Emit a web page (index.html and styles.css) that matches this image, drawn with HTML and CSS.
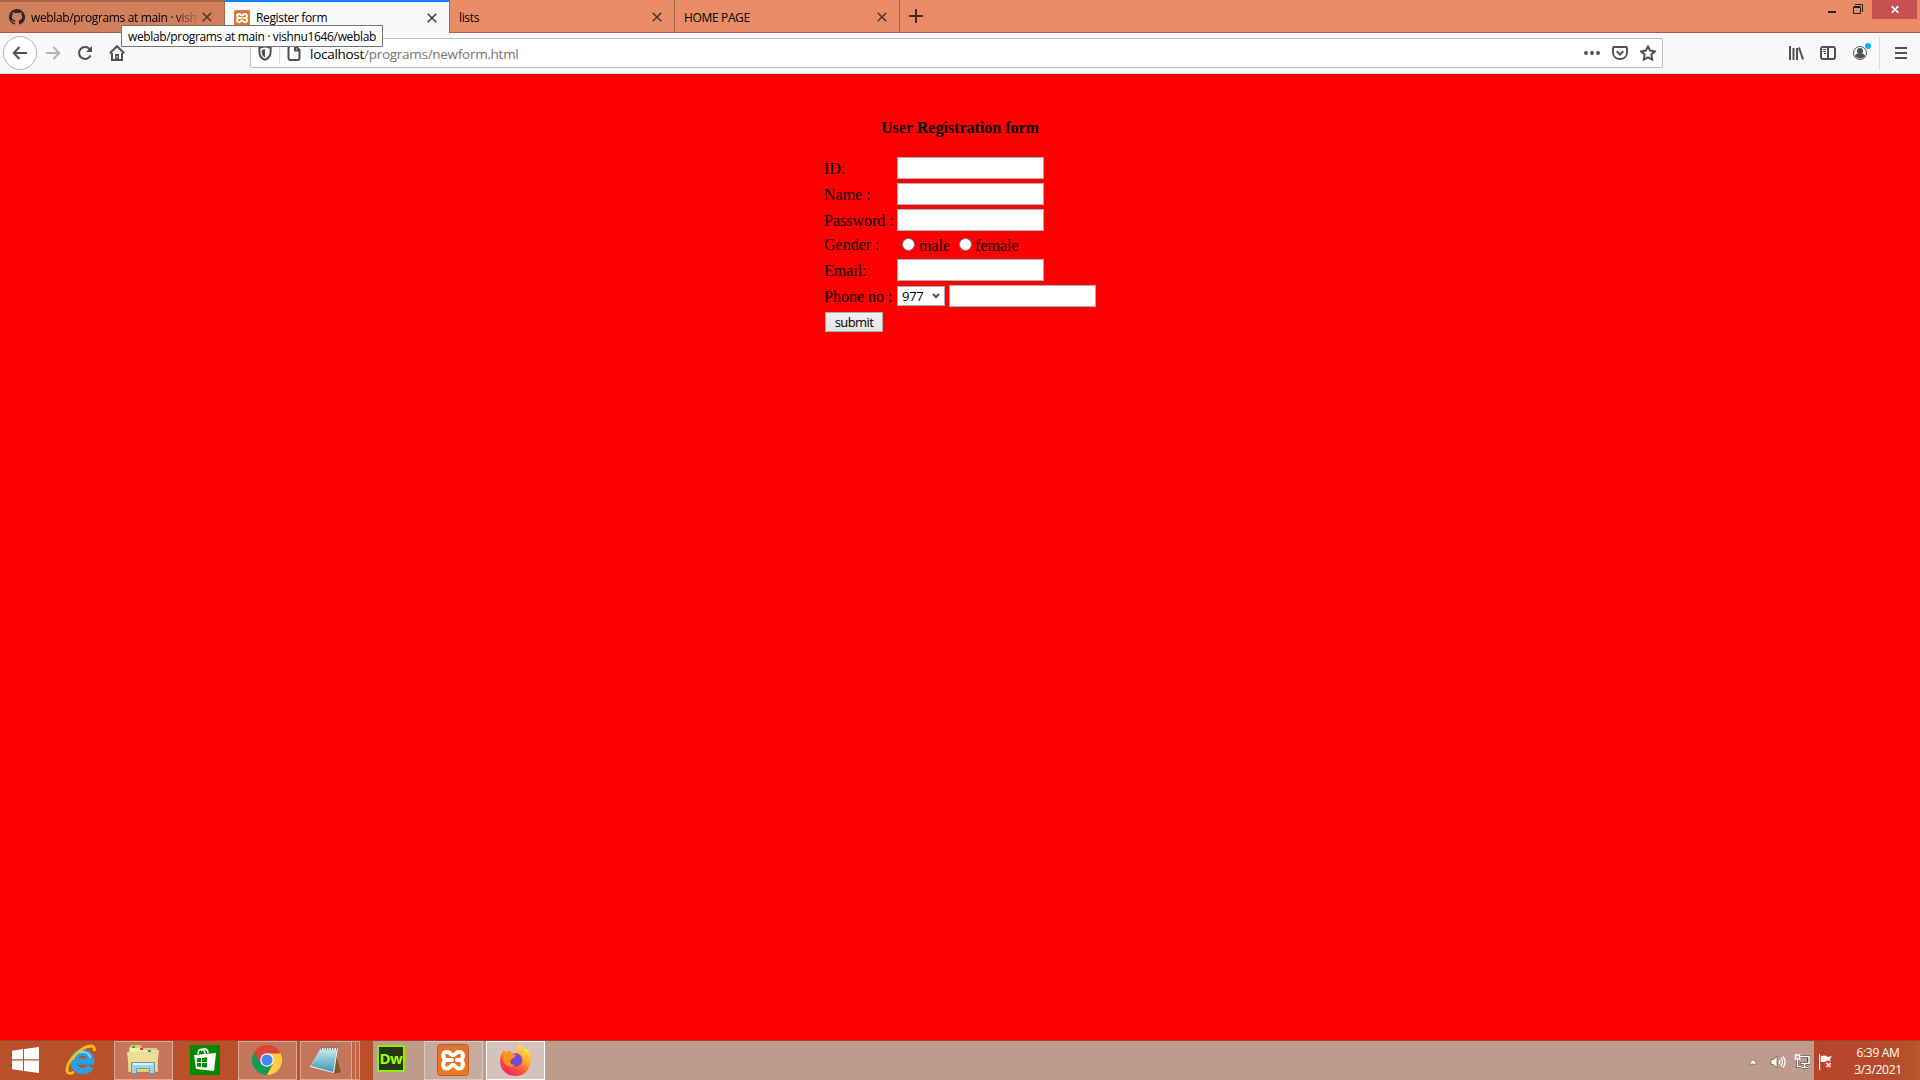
FILE: index.html
```html
<!DOCTYPE html>
<html lang="en">
<head>
<meta charset="utf-8">
<title>Register form</title>
<link rel="stylesheet" href="styles.css">
</head>
<body>
<header class="tabs">
  <div class="tab hovered">
    <svg class="favicon" viewBox="0 0 16 16"><path fill="#24292e" d="M8 0C3.58 0 0 3.58 0 8c0 3.54 2.29 6.53 5.47 7.59.4.07.55-.17.55-.38v-1.49c-2.01.37-2.53-.49-2.69-.94-.09-.23-.48-.94-.82-1.13-.28-.15-.68-.52-.01-.53.63-.01 1.08.58 1.23.82.72 1.21 1.87.87 2.33.66.07-.52.28-.87.51-1.07-1.78-.2-3.64-.89-3.64-3.95 0-.87.31-1.59.82-2.15-.08-.2-.36-1.02.08-2.12 0 0 .67-.21 2.2.82a7.6 7.6 0 0 1 4 0c1.53-1.04 2.2-.82 2.2-.82.44 1.1.16 1.92.08 2.12.51.56.82 1.27.82 2.15 0 3.07-1.87 3.75-3.65 3.95.29.25.54.73.54 1.48v2.2c0 .21.15.46.55.38A8 8 0 0 0 8 0Z"/></svg>
    <span class="tab-title faded">weblab/programs at main · vishnu1646/weblab</span>
    <svg class="close" viewBox="0 0 10 10"><path d="M.7.7l8.6 8.6M9.3.7L.7 9.3"/></svg>
  </div>
  <div class="tab active">
    <svg class="favicon" viewBox="0 0 32 32"><use href="#xampp"/></svg>
    <span class="tab-title">Register form</span>
    <svg class="close" viewBox="0 0 10 10"><path d="M.7.7l8.6 8.6M9.3.7L.7 9.3"/></svg>
  </div>
  <div class="tab">
    <span class="tab-title">lists</span>
    <svg class="close" viewBox="0 0 10 10"><path d="M.7.7l8.6 8.6M9.3.7L.7 9.3"/></svg>
  </div>
  <div class="tab">
    <span class="tab-title">HOME PAGE</span>
    <svg class="close" viewBox="0 0 10 10"><path d="M.7.7l8.6 8.6M9.3.7L.7 9.3"/></svg>
  </div>
  <svg class="new-tab" viewBox="0 0 14 14"><path d="M7 0v14M0 7h14"/></svg>
  <div class="window-buttons">
    <svg class="win-min" viewBox="0 0 8 2"><path fill="#222" d="M0 0h8v2H0z"/></svg>
    <svg class="win-max" viewBox="0 0 10 10"><path fill="none" stroke="#222" d="M2 .5h7.5V8M.5 3.5h7v6h-7zM.5 2.5h7"/></svg>
    <span class="win-close"><svg viewBox="0 0 8 7"><path d="M.7.2l6.6 6.6M7.3.2L.7 6.8"/></svg></span>
  </div>
</header>
<div class="tooltip">weblab/programs at main · vishnu1646/weblab</div>

<nav class="toolbar">
  <span class="back"><svg viewBox="0 0 16 16"><path d="M15 8H2M7.500 2L1.700 8l5.800 6"/></svg></span>
  <svg class="icon forward" viewBox="0 0 16 16"><path d="M1 8h13M8.500 2l5.800 6-5.800 6"/></svg>
  <svg class="icon reload" viewBox="0 0 16 16"><path d="M13.500 10.500A6 6 0 1 1 12.600 4"/><path class="solid" d="M15 1v6H9z"/></svg>
  <svg class="icon home" viewBox="0 0 16 16"><path d="M.8 8.300L8 1.200l7.200 7.100M3 8v7h10V8"/><path class="solid" d="M6 9h4v6H6z"/><path class="knob" d="M7.500 11h1v2h-1z"/></svg>
  <div class="urlbar">
    <svg class="icon shield" viewBox="0 0 16 16"><path d="M8 1.200l5.600 1.600v4c0 4-2.400 7-5.600 8-3.200-1-5.600-4-5.600-8v-4z"/><path class="solid" d="M8 4l-3.200.9v2.300C4.800 9.700 6 11.500 8 12.400z"/></svg>
    <i class="url-divider"></i>
    <svg class="icon document" viewBox="0 0 16 16"><path d="M4.500 1h5l4 4v8c0 1.200-.8 2-2 2h-7c-1.200 0-2-.8-2-2V3c0-1.200.8-2 2-2zM9 1v4.500h4.500"/></svg>
    <span class="url">localhost<em>/programs/newform.html</em></span>
    <svg class="icon dots" viewBox="0 0 16 16"><circle class="solid" cx="2" cy="8" r="2"/><circle class="solid" cx="8" cy="8" r="2"/><circle class="solid" cx="14" cy="8" r="2"/></svg>
    <svg class="icon pocket" viewBox="0 0 16 16"><path d="M2.200 2h11.600c.8 0 1.200.5 1.200 1.200V7c0 4.200-3 7-7 7s-7-2.800-7-7V3.200C1 2.500 1.400 2 2.200 2zM4.700 6.300L8 9.500l3.300-3.200"/></svg>
    <svg class="icon star" viewBox="0 0 16 16"><path d="M8 1.400l2 4.200 4.900.7-3.500 3.300.8 5L8 12.300l-4.200 2.300.8-5L1.100 6.300 6 5.600z"/></svg>
  </div>
  <svg class="icon library" viewBox="0 0 16 16"><path d="M2 1v14M5.500 3v12M9 3v12M11 2.500l4 12"/></svg>
  <svg class="icon sidebar" viewBox="0 0 16 16"><path d="M3 2h10c1.300 0 2 .7 2 2v8c0 1.300-.7 2-2 2H3c-1.300 0-2-.7-2-2V4c0-1.300.7-2 2-2zM8 2v12"/><path class="thin" d="M3 4.500h3M3 6.500h3M4 8.500h2"/></svg>
  <svg class="icon account" viewBox="0 0 20 20"><circle class="thin" cx="9" cy="11" r="6.500"/><circle class="solid" cx="9" cy="9" r="3"/><path class="solid" d="M4 14c.6-2 2-2.500 3-2.500h4c1.500 0 2.500 1 3 2.500-1.300 1.800-3 2.500-5 2.500s-3.800-.9-5-2.500z"/><circle cx="17" cy="4" r="3"/></svg>
  <i class="tool-divider"></i>
  <svg class="icon menu" viewBox="0 0 16 16"><path d="M2 3h12M2 8h12M2 13h12"/></svg>
</nav>

<main class="page">
  <form class="registration">
    <h4>User Registration form</h4>
    <label for="id">ID:</label><input id="id" class="field" type="text">
    <label for="name">Name :</label><input id="name" class="field" type="text">
    <label for="password">Password :</label><input id="password" class="field" type="password">
    <span>Gender :</span>
    <div class="gender"><input type="radio" name="gender" id="m"><label for="m">male</label><input type="radio" name="gender" id="f"><label for="f">female</label></div>
    <label for="email">Email:</label><input id="email" class="field" type="text">
    <label for="phone">Phone no :</label>
    <div class="phone"><div class="code">977<svg viewBox="0 0 8 6"><path d="M1 1l3 3 3-3"/></svg></div><input id="phone" class="field" type="text"></div>
    <button type="button">submit</button>
  </form>
</main>

<footer class="taskbar">
  <div class="task start"><svg width="27" height="26" viewBox="0 0 27 26"><path fill="#fff" d="M0 3.700l11-1.600v10.200H0zM12 1.900L27 0v12.300H12zM0 13.500h11v10.300L0 22.300zM12 13.500h15V26l-15-2z"/></svg></div>
  <div class="task ie"><svg width="32" height="32" viewBox="0 0 32 32"><path fill="none" stroke="#2c9fe0" stroke-width="6.500" d="M8 17.500h18c0-6-4-9-8.500-9s-9 3.500-9 9 4 9.500 9 9.500c3.500 0 6.500-1.500 8-4.500"/><path fill="none" stroke="#7fd4fa" stroke-width="2" d="M8 16c1-5 5-8 9.500-8s7 2.500 8 6"/><path fill="none" stroke="#f9bd16" stroke-width="2.800" d="M29 7c1-3 0-5-3-5C18 2 3 15 2 25c-.3 4 2 6 7 3"/></svg></div>
  <div class="task open explorer"><svg width="33" height="30" viewBox="0 0 33 30"><path fill="#e5ca72" d="M2 3l2-3h9l2 3h15l1 24H1z"/><path fill="#f9edb0" d="M3 3h11l2 2h13v4H3z"/><path fill="#f0dc92" d="M0 7h18l2-2h12l-2 20H2z"/><path fill="#3aaa35" d="M5 1h3v2H5z"/><path fill="#d64224" d="M13 3h3v2h-3z"/><path fill="#238ed8" d="M21 5h3v2h-3z"/><path fill="#9fd3ea" stroke="#5a9dc0" d="M4.500 17.500h23v11h-5v-5h-13v5h-5z"/><path fill="#d9f1fb" d="M6 18h20v2H6z"/></svg></div>
  <div class="task store"><svg width="30" height="30" viewBox="0 0 30 30"><path fill="#008a00" d="M0 0h30v30H0z"/><path fill="none" stroke="#fff" stroke-width="1.500" d="M8 9c0-6 7-7 7 0M11 6c3-4 7-2 7 2"/><path fill="#fff" d="M4 10l22-2-2 18-18-2z"/><path fill="#008a00" d="M7 13.500l4-.5v4H7zM12 12.900l5-.6v4.700h-5zM7 18h4v4l-4-.5zM12 18h5v4.700l-5-.6z"/></svg></div>
  <div class="task open chrome"><svg width="30" height="30" viewBox="0 0 30 30"><path fill="#109d58" d="M15 15L2 7.500A15 15 0 0 0 15 30l6-11z"/><path fill="#ffcd40" d="M15 15l6 4-6 11A15 15 0 0 0 28 7.500H15z"/><path fill="#db4437" d="M2 7.500l6 10L15 8.500h13.500A15 15 0 0 0 2 7.500z"/><circle cx="15" cy="15" r="6.800" fill="#f5f5f5"/><circle cx="15" cy="15" r="5.500" fill="#4285f4"/></svg></div>
  <div class="task open notepad"><svg width="31" height="30" viewBox="0 0 31 30"><path fill="#7a5a20" d="M26 11l5 16-7 2z"/><path fill="#e9f5f7" d="M11 3h17l-4 25L0 22z"/><path fill="url(#paper)" d="M10 5h17l-4 22L1 21z"/><path stroke="#777" stroke-dasharray="1 1.500" stroke-width="4" d="M11 3h17"/></svg></div>
  <i class="stack"></i><i class="stack"></i>
  <div class="task dreamweaver"><span>Dw</span></div>
  <div class="task open xampp"><svg width="32" height="32" viewBox="0 0 32 32"><use href="#xampp"/></svg></div>
  <div class="task open current firefox"><svg width="31" height="32" viewBox="0 0 31 32"><path fill="url(#flame)" d="M20 0c1 3 3 4 4 6 1-1 1-2 1-3 5 4 6 9 5.500 15C30 26 24 32 15.500 32S0 26 0 17c0-4 1.500-8 4-11l1 3c2-2 4-2 6-1.500 1 1.500 3 2 5 2C15 6 18 4 20 0z"/><circle cx="15.500" cy="16" r="6.800" fill="#7646d7"/><path fill="#ff9320" d="M4 6l1 3c2-2 4-2 6-1.500 0 2 1 3 5 3.500 0 3-4 3-5 5-2 2 0 5 4 5-4 4-12 1-12-6 0-3 .5-6 1-9z"/></svg></div>
  <div class="tray">
    <svg class="chevron" width="8" height="6" viewBox="0 0 8 6"><path fill="#fff" stroke="#786058" stroke-width=".6" d="M0 5l4-4.500L8 5z"/></svg>
    <svg class="volume" width="16" height="14" viewBox="0 0 16 14"><path fill="#fff" stroke="#675047" stroke-width=".7" d="M1 4.500h2.500L7 1v12L3.500 9.500H1z"/><path fill="none" stroke="#fff" stroke-width="1.300" d="M9 5q1.500 2 0 4M11 3q3 4 0 8M13 1.500q4 5.500 0 11"/></svg>
    <svg class="network" width="17" height="15" viewBox="0 0 17 15"><path fill="none" stroke="#5d4840" stroke-width="3" d="M5.500 2.500h9v7h-8M10.500 10v3M7 13.500h7M3.500 5v7.500H7"/><path fill="none" stroke="#fff" stroke-width="1.500" d="M6 2.500h9v7H7M10.500 10v3M7 13.500h7M3.500 5v7.500H7M1.500 1h4v4h-4z"/></svg>
    <svg class="flag" width="16" height="16" viewBox="0 0 16 16"><path fill="#fff" d="M1 0h1.200v16H1zM3 2l4-.5 3 1.500 4-1-2 3 1 3H3z"/><circle cx="10.500" cy="11" r="4.500" fill="#e13d35"/><path stroke="#fff" stroke-width="1.600" d="M8.500 9l4 4M12.500 9l-4 4"/></svg>
  </div>
  <div class="clock"><span>6:39 AM</span><span>3/3/2021</span></div>
</footer>

<svg class="defs" width="0" height="0">
  <defs>
    <linearGradient id="orange" x2="0" y2="1"><stop stop-color="#d9743a"/><stop offset=".3" stop-color="#e5712a"/><stop offset="1" stop-color="#ea7a22"/></linearGradient>
    <linearGradient id="paper" x2="0" y2="1"><stop stop-color="#c4e6ec"/><stop offset="1" stop-color="#3b98b0"/></linearGradient>
    <linearGradient id="flame" x1=".8" x2=".2" y2="1"><stop stop-color="#fff044"/><stop offset=".4" stop-color="#ffa52a"/><stop offset=".7" stop-color="#ff4b3c"/><stop offset="1" stop-color="#e81e70"/></linearGradient>
    <symbol id="xampp" viewBox="0 0 32 32"><rect x=".5" y=".5" width="31" height="31" rx="3" fill="url(#orange)" stroke="#c05a20"/><path fill="none" stroke="#fff" stroke-width="4" stroke-linejoin="round" stroke-linecap="round" d="M8.500 16C4.500 12 6 8 10 8s3 3 6 3 2-3 6-3 5.500 4 2 8c3.500 4 2 8.500-2 8.500s-3-3.500-6-3.500-2 3.500-6 3.500S4.500 20 8.500 16zM9 16h6M20 16h4"/></symbol>
  </defs>
</svg>
</body>
</html>
```
FILE: styles.css
```css
* { box-sizing: border-box; }
body {
  margin: 0;
  width: 1920px;
  height: 1080px;
  overflow: hidden;
  display: flex;
  flex-direction: column;
  font-family: "Open Sans", "Noto Sans", sans-serif;
  font-size: 12px;
  color: #000;
}
svg { flex: none; display: block; }
.defs { position: absolute; }

/* Tab strip */
.tabs {
  height: 33px;
  display: flex;
  align-items: flex-start;
  background: #ea8d66;
  border-bottom: 1px solid #9f6046;
}
.tab {
  width: 225px;
  height: 32px;
  padding: 2px 12px 0 9px;
  display: flex;
  align-items: center;
  border-right: 1px solid #a8664b;
}
.tab.hovered { background: #d27f5c; border-top: 2px solid #a96549; padding-top: 0; }
.tab.active { height: 33px; background: #f9f9fa; border-top: 2px solid #0a84ff; padding-top: 0; }
.favicon { width: 16px; height: 16px; margin-right: 6px; }
.tab-title {
  flex: 1;
  min-width: 0;
  overflow: hidden;
  white-space: nowrap;
  font-size: 12px;
  letter-spacing: -.35px;
}
.tab-title.faded { mask-image: linear-gradient(to right, #000 140px, transparent 170px); }
.close { width: 10px; height: 10px; margin-left: 6px; }
.close path { stroke: #4d3429; stroke-width: 1.5; fill: none; }
.new-tab { width: 14px; height: 14px; margin: 9px 0 0 9px; }
.new-tab path { stroke: #46291d; stroke-width: 2; }
.window-buttons { margin-left: auto; display: flex; align-items: flex-start; padding-right: 3px; }
.win-min { width: 8px; height: 2px; margin: 11px 17px 0 0; }
.win-max { width: 10px; height: 10px; margin: 4px 9px 0 0; }
.win-close { width: 45px; height: 19px; background: #c75050; display: grid; place-items: center; }
.win-close svg { width: 8px; height: 7px; }
.win-close path { stroke: #fff; stroke-width: 1.7; }
.tooltip {
  position: absolute;
  left: 121px;
  top: 25px;
  width: 262px;
  height: 22px;
  border: 1px solid #767676;
  background: #fff;
  padding-left: 6px;
  line-height: 22px;
  font-size: 12px;
  letter-spacing: -.35px;
  white-space: nowrap;
  z-index: 1;
}

/* Navigation toolbar */
.toolbar {
  height: 41px;
  display: flex;
  align-items: center;
  background: #f9f9fa;
  border-bottom: 1px solid #dcdcdc;
  padding: 0 11px 0 3px;
}
.back {
  width: 34px;
  height: 34px;
  border: 1px solid #b1b1b1;
  border-radius: 50%;
  background: #fff;
  display: grid;
  place-items: center;
}
.back svg, .icon { width: 16px; height: 16px; }
.back path, .icon path, .icon circle { fill: none; stroke: #505055; stroke-width: 2; }
.icon .solid { fill: #505055; stroke: none; }
.icon .knob { fill: #f9f9fa; stroke: none; }
.icon .thin { stroke-width: 1; }
.forward { margin-left: 8px; }
.icon.forward path { stroke: #b5b5b6; }
.reload { margin-left: 16px; }
.home { margin-left: 16px; }
.urlbar {
  flex: none;
  width: 1413px;
  height: 30px;
  margin-left: 125px;
  border: 1px solid #bcbcbc;
  border-radius: 2px;
  background: #fff;
  display: flex;
  align-items: center;
  padding: 0 6px;
}
.url-divider { width: 1px; height: 22px; background: #dedede; margin: 0 6px; }
.url { flex: 1; margin-left: 8px; padding-top: 1px; font-size: 13.5px; letter-spacing: -.28px; }
.url em { font-style: normal; color: #777; }
.pocket, .star { margin-left: 12px; }
.library { margin-left: 125px; }
.sidebar { margin-left: 16px; }
.icon.account { width: 20px; height: 20px; margin: -3px 0 0 15px; }
.icon.account circle:last-child { fill: #00b3f4; stroke: none; }
.tool-divider { width: 1px; height: 34px; background: #dcdcde; margin: 0 13px 0 8px; }

/* Registration page */
.page {
  height: 966px;
  background: #f00;
  font: 16px/20px "Liberation Serif", serif;
  display: flex;
  justify-content: center;
  align-items: flex-start;
  padding-top: 44px;
}
.registration {
  width: 272px;
  display: grid;
  grid-template-columns: 73px 199px;
  grid-template-rows: 39px 26px 26px 26px 24px 26px 26px 24px;
  white-space: nowrap;
}
.registration h4 { grid-column: 1 / 3; margin: 0; text-align: center; font-size: 16px; }
.registration > label { padding-top: 2px; }
.field {
  width: 147px;
  height: 22px;
  border: 1px solid #abadb3;
  background: #fff;
  padding: 1px;
  margin: 0;
}
.gender { display: flex; align-items: flex-start; }
.gender label { padding-top: 1px; }
.gender input {
  appearance: none;
  width: 13px;
  height: 13px;
  border: 1px solid #777;
  border-radius: 50%;
  background: #fff;
  margin: 3px 4px 0 5px;
}
.gender label + input { margin-left: 9px; margin-right: 3px; }
.phone { display: flex; gap: 4px; }
.code {
  width: 48px;
  height: 20px;
  margin-top: 1px;
  border: 1px solid #abadb3;
  background: #fff;
  display: flex;
  align-items: center;
  justify-content: space-between;
  padding: 0 4px;
  font: 13px/18px "Open Sans", sans-serif;
  letter-spacing: -.3px;
}
.code svg { width: 8px; height: 6px; }
.code path { fill: none; stroke: #505050; stroke-width: 2; }
button {
  width: 58px;
  height: 20px;
  margin: 1px;
  padding: 1px 0 0;
  border: 1px solid #acacac;
  background: linear-gradient(#f0f0f0, #e5e5e5);
  color: #000;
  font: 13px/17px "Open Sans", sans-serif;
  letter-spacing: -.6px;
}

/* Taskbar */
.taskbar {
  height: 40px;
  display: flex;
  background: linear-gradient(to right, #b95029 373px, #bf9b8c 373px 1814px, #b7442a 1814px, #b64d2b 1900px, #b9572e);
  border-top: 1px solid #9c4527;
}
.task { height: 39px; display: grid; place-items: center; padding-bottom: 2px; }
.open { width: 59px; border: 1px solid #e0a891; background: #c57559; padding-right: 1px; }
.start { width: 50px; }
.ie { width: 64px; padding-right: 2px; }
.store { width: 65px; padding-right: 2px; }
.chrome { margin-right: 3px; }
.notepad { width: 52px; }
.stack { width: 4px; height: 39px; border: 1px solid #d99b83; border-left: 0; background: #bd6546; }
.dreamweaver { width: 64px; padding: 0 0 5px 17px; justify-items: start; }
.dreamweaver span {
  width: 28px;
  height: 27px;
  border: 2px solid #8cf000;
  background: #263512;
  color: #9eff00;
  font: bold 15px/22px "Open Sans", sans-serif;
  text-align: center;
  letter-spacing: -.5px;
}
.xampp { margin-right: 3px; border-color: #dccac2; background: #c7aa9e; }
.current { border-color: #fff; background: #d5c2ba; }
.tray { margin-left: auto; display: flex; align-items: center; padding-top: 2px; }
.volume { margin-left: 13px; }
.network { margin-left: 8px; }
.flag { margin-left: 7px; }
.clock {
  width: 86px;
  display: flex;
  flex-direction: column;
  align-items: center;
  color: #fff;
  font-size: 12px;
  line-height: 17px;
  padding: 3px 0 0 2px;
  letter-spacing: -.3px;
}
```
